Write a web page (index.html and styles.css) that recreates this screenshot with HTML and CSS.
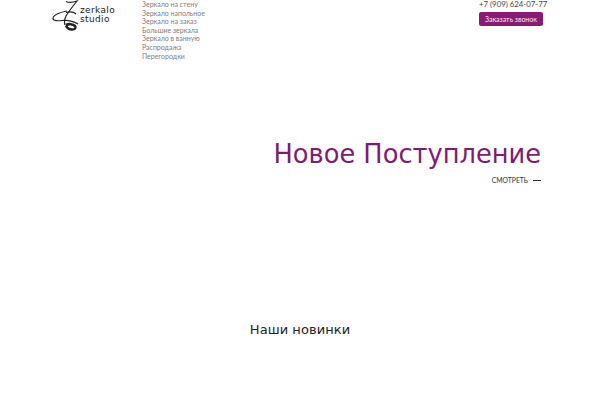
FILE: index.html
```html
<!DOCTYPE html>
<html lang="ru">
<head>
<meta charset="utf-8">
<title>Zerkalo Studio</title>
<link rel="stylesheet" href="styles.css">
</head>
<body>
<header class="header">
  <a class="logo" href="#">
    <svg class="logo-mark" width="28" height="32" viewBox="0 0 28 32" fill="none" stroke="#222" stroke-width="1.2">
      <path d="M14 1.5C17 3 21 2.5 25 1C21 6 17 11 14 16C12.5 19 12 22 13 25"/>
      <path d="M14 12.5C18 11.5 22 12 24 14"/>
      <path d="M15 11C9 12 1 15 1 18.5C1 21 6 21 10 20.5C15 20 21 21 26 24"/>
      <path d="M14 25C17 23.5 21 24 23 26C24.5 28 23 29.5 20 29.5C17 29.5 15 28 14 25.5" stroke-width="2.6"/>
    </svg>
    <span class="logo-text"><span>zerkalo</span><span>studio</span></span>
  </a>
  <nav class="menu">
    <a href="#">Зеркало на стену</a>
    <a href="#">Зеркало напольное</a>
    <a href="#">Зеркало на заказ</a>
    <a href="#">Большие зеркала</a>
    <a href="#">Зеркало в ванную</a>
    <a href="#">Распродажа</a>
    <a href="#">Перегородки</a>
  </nav>
  <div class="contact">
    <a class="phone" href="#">+7 (909) 624-07-77</a>
    <a class="call" href="#">Заказать звонок</a>
  </div>
</header>
<section class="hero">
  <h1>Новое Поступление</h1>
  <a class="more" href="#">СМОТРЕТЬ <span class="dash"></span></a>
</section>
<h2 class="new">Наши новинки</h2>
</body>
</html>
```
FILE: styles.css
```css
* { box-sizing: border-box; }
html, body { margin: 0; height: 400px; overflow: hidden; background: #fff; }
body { font-family: "Lato", sans-serif; color: #222; }
a { color: inherit; text-decoration: none; }
.header { display: flex; align-items: flex-start; height: 62px; padding-left: 52px; }
.logo { display: flex; width: 90px; height: 32px; flex: none; }
.logo-mark { flex: none; }
.logo-text { display: flex; flex-direction: column; font-family: "DejaVu Sans", sans-serif; font-size: 9px; line-height: 9px; letter-spacing: 0.35px; color: #222; padding-top: 6px; }
.menu { display: flex; flex-direction: column; width: 337px; flex: none; font-size: 7px; line-height: 8.6px; color: #808080; }
.contact { display: flex; flex-direction: column; align-items: flex-start; width: 68px; flex: none; }
.phone { font-size: 7.8px; line-height: 9px; color: #444; white-space: nowrap; }
.call { margin-top: 3px; background: #8b1a77; color: #eee; font-size: 7px; line-height: 14px; padding: 0 6px; border-radius: 2px; white-space: nowrap; }
.hero { display: flex; flex-direction: column; align-items: flex-end; padding: 77px 59px 0 0; }
h1 { margin: 0; font: 400 25.7px/30px "DejaVu Sans", sans-serif; color: #7f1a75; white-space: nowrap; }
.more { display: flex; align-items: center; font-size: 6.8px; line-height: 10px; margin-top: 6px; color: #333; }
.dash { width: 8px; height: 1px; background: #333; margin-left: 5px; }
.new { margin: 136px 0 0; text-align: center; font: 400 13px/18px "DejaVu Sans", sans-serif; letter-spacing: 0.07px; color: #222; }
```
